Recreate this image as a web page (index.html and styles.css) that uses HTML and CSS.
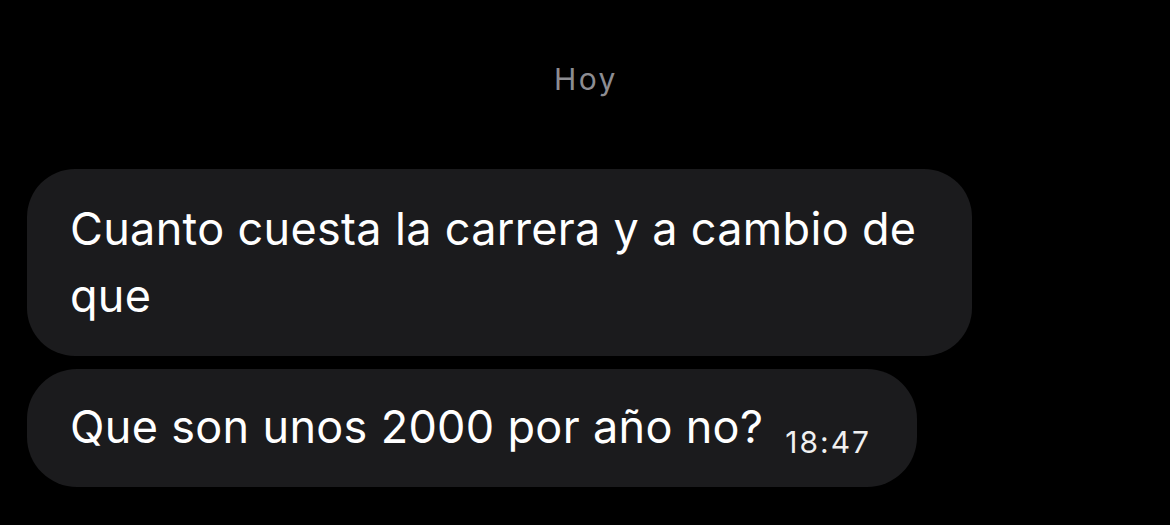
FILE: index.html
```html
<!DOCTYPE html>
<html lang="es">
<head>
<meta charset="utf-8">
<title>Chat</title>
<link rel="stylesheet" href="styles.css">
</head>
<body>
<main class="chat">
  <div class="day">Hoy</div>
  <div class="messages">
    <div class="bubble bubble-wide">Cuanto cuesta la carrera y a cambio de que</div>
    <div class="bubble">Que son unos 2000 por año no?<span class="time">18:47</span></div>
  </div>
</main>
</body>
</html>
```

FILE: styles.css
```css
html, body {
  margin: 0;
  padding: 0;
  background: #000;
}

body {
  width: 1170px;
  height: 525px;
  overflow: hidden;
  font-family: Inter, "Noto Sans", "Liberation Sans", sans-serif;
  color: #fff;
}

.chat {
  display: flex;
  flex-direction: column;
  padding-top: 57px;
}

.day {
  text-align: center;
  font-size: 30px;
  line-height: 44px;
  color: #8d8d92;
  letter-spacing: 2.4px;
  padding-left: 2px;
}

.messages {
  display: flex;
  flex-direction: column;
  align-items: flex-start;
  gap: 13px;
  padding-left: 27px;
  margin-top: 68px;
}

.bubble {
  background: #1b1b1d;
  border-radius: 50px;
  font-size: 45px;
  line-height: 67px;
  letter-spacing: 0.32px;
  padding: 24px 46px 27px 43px;
  max-width: 852px;
}

.bubble-wide {
  padding: 26px 50px 27px 43px;
  border-radius: 48px;
}

.time {
  display: inline-block;
  font-size: 30px;
  line-height: 29px;
  letter-spacing: 2px;
  margin-left: 22px;
  vertical-align: -10px;
  color: #f0f0f0;
}
```
